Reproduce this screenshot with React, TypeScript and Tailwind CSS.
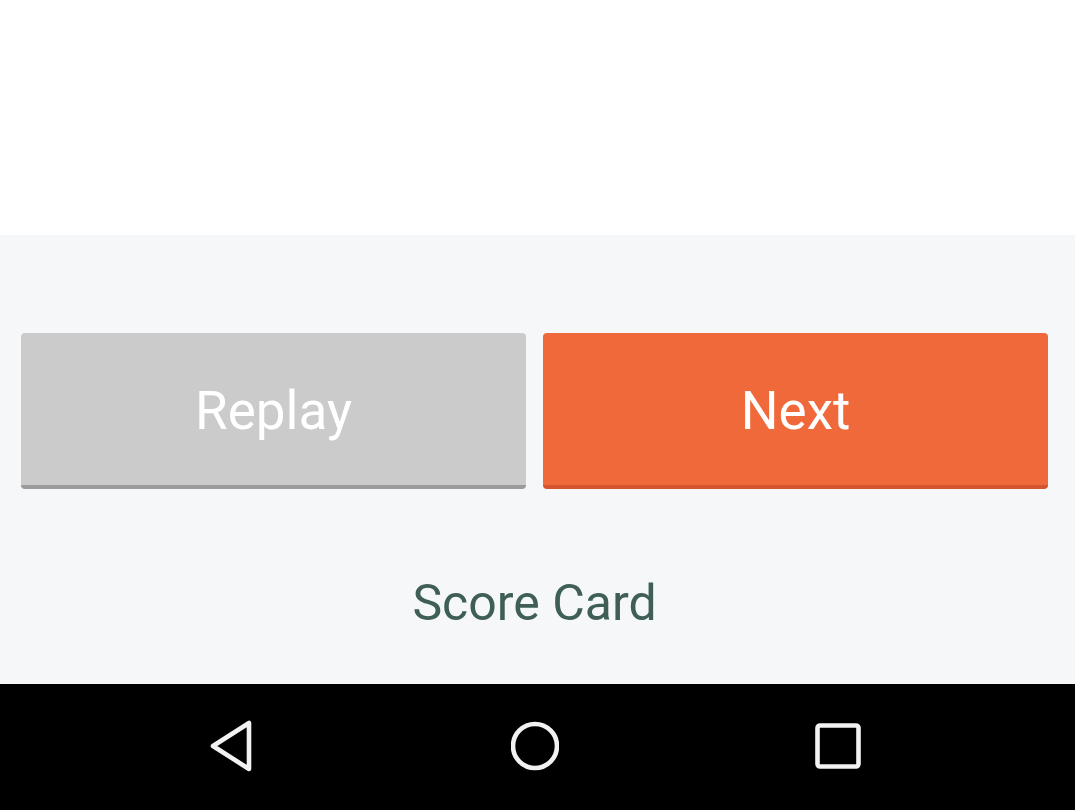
export default function App() {
  return (
    <div
      className="flex h-[810px] w-[1075px] flex-col overflow-hidden bg-white"
      style={{ fontFamily: "Roboto, 'Noto Sans', sans-serif" }}
    >
      <div className="h-[235px] shrink-0 bg-white" />

      <section className="flex h-[449px] shrink-0 flex-col bg-[#f5f7f8] pl-[21px] pr-[27px] pt-[98px]">
        <div className="flex gap-[17px]">
          <button
            type="button"
            className="flex h-[156px] flex-1 items-center justify-center rounded-[4px] border-b-[4px] border-[#9b9b9b] bg-[#cbcbcb] pt-[4px] text-[53px] leading-none text-white"
          >
            Replay
          </button>
          <button
            type="button"
            className="flex h-[156px] flex-1 items-center justify-center rounded-[4px] border-b-[4px] border-[#d4552d] bg-[#f0693b] pt-[4px] text-[53px] leading-none text-white"
          >
            Next
          </button>
        </div>
        <div className="mt-[84px] text-center text-[50px] leading-[60px] text-[#3f5e57]">
          Score Card
        </div>
      </section>

      <nav className="flex h-[126px] shrink-0 items-center justify-center gap-[255px] bg-black pb-[2px] pr-[6px]">
        <svg width="48" height="52" viewBox="0 0 48 52" fill="none">
          <path
            d="M41 3 L41 49 L5 26 Z"
            stroke="#f2f2f2"
            strokeWidth="4.6"
            strokeLinejoin="round"
          />
        </svg>
        <svg width="48" height="52" viewBox="0 0 48 52" fill="none">
          <circle cx="24" cy="26" r="22" stroke="#f2f2f2" strokeWidth="4.6" />
        </svg>
        <svg width="48" height="52" viewBox="0 0 48 52" fill="none">
          <rect
            x="3.5"
            y="5.5"
            width="41"
            height="41"
            rx="2.5"
            stroke="#f2f2f2"
            strokeWidth="4.6"
          />
        </svg>
      </nav>
    </div>
  );
}
